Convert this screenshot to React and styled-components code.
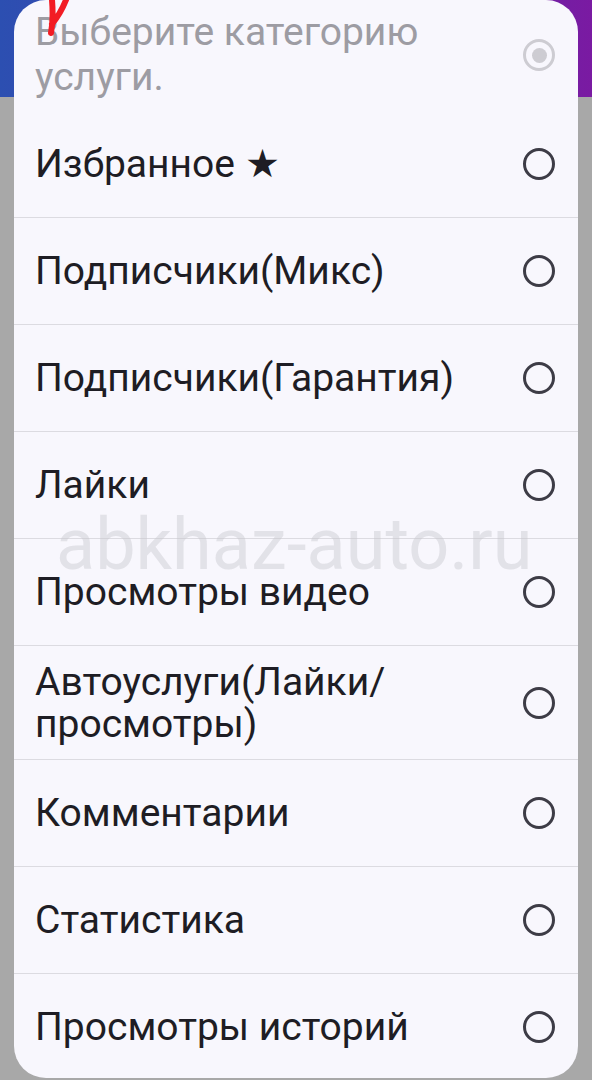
import styled, { createGlobalStyle } from "styled-components";

const GlobalStyle = createGlobalStyle`
  html, body {
    margin: 0;
    padding: 0;
  }
  body {
    font-family: Roboto, "Noto Sans", sans-serif;
  }
`;

const Screen = styled.div`
  position: relative;
  width: 592px;
  height: 1080px;
  overflow: hidden;
  padding: 0 14px;
  box-sizing: border-box;
  background:
    linear-gradient(to right, #2c4fb1, #4a3cae 45%, #7a1aa2) top / 100% 97px no-repeat,
    #a8a8a8;
`;

const Dialog = styled.div`
  position: relative;
  height: 1078px;
  background: #f8f7fd;
  border-radius: 32px;
  overflow: hidden;
`;

const Header = styled.div`
  display: flex;
  align-items: center;
  justify-content: space-between;
  height: 110px;
  padding: 0 23px 0 21px;
  box-sizing: border-box;
`;

const Title = styled.div`
  font-size: 39px;
  line-height: 45px;
  color: #9d9ca3;
  max-width: 420px;
`;

const List = styled.ul`
  list-style: none;
  margin: 0;
  padding: 0;
`;

const Row = styled.li`
  display: flex;
  align-items: center;
  justify-content: space-between;
  gap: 20px;
  min-height: ${(p) => (p.$tall ? "114px" : "107px")};
  padding: 0 23px 0 21px;
  box-sizing: border-box;
  border-top: ${(p) => (p.$first ? "none" : "1px solid #dcdbe1")};
`;

const Label = styled.span`
  font-size: 39px;
  line-height: 42px;
  color: #1e1d24;
  max-width: 440px;
`;

const Radio = styled.span`
  flex: none;
  display: flex;
  align-items: center;
  justify-content: center;
  width: 32px;
  height: 32px;
  border-radius: 50%;
  border: 3px solid ${(p) => (p.$checked ? "#cdccd2" : "#3d3c46")};
  box-sizing: border-box;

  &::after {
    content: "";
    display: ${(p) => (p.$checked ? "block" : "none")};
    width: 15px;
    height: 15px;
    border-radius: 50%;
    background: #cdccd2;
  }
`;

const Watermark = styled.div`
  position: absolute;
  left: 56px;
  top: 505px;
  font-size: 72px;
  line-height: 80px;
  color: rgba(200, 200, 206, 0.45);
  pointer-events: none;
`;

const Scribble = styled.svg`
  position: absolute;
  left: 44px;
  top: 0;
`;

const items = [
  "Избранное ★",
  "Подписчики(Микс)",
  "Подписчики(Гарантия)",
  "Лайки",
  "Просмотры видео",
  "Автоуслуги(Лайки/ просмотры)",
  "Комментарии",
  "Статистика",
  "Просмотры историй",
];

export default function App() {
  return (
    <>
      <GlobalStyle />
      <Screen>
        <Dialog>
          <Header>
            <Title>Выберите категорию услуги.</Title>
            <Radio $checked />
          </Header>
          <List>
            {items.map((item, i) => (
              <Row key={item} $first={i === 0} $tall={item.includes("/")}>
                <Label>{item}</Label>
                <Radio />
              </Row>
            ))}
          </List>
        </Dialog>
        <Watermark>abkhaz-auto.ru</Watermark>
        <Scribble width="30" height="40" viewBox="0 0 30 40">
          <path
            d="M8 0 C9 12 9 22 7 33 M22 0 C18 10 13 18 8 24"
            stroke="#f21c24"
            strokeWidth="6"
            strokeLinecap="round"
            fill="none"
          />
        </Scribble>
      </Screen>
    </>
  );
}
